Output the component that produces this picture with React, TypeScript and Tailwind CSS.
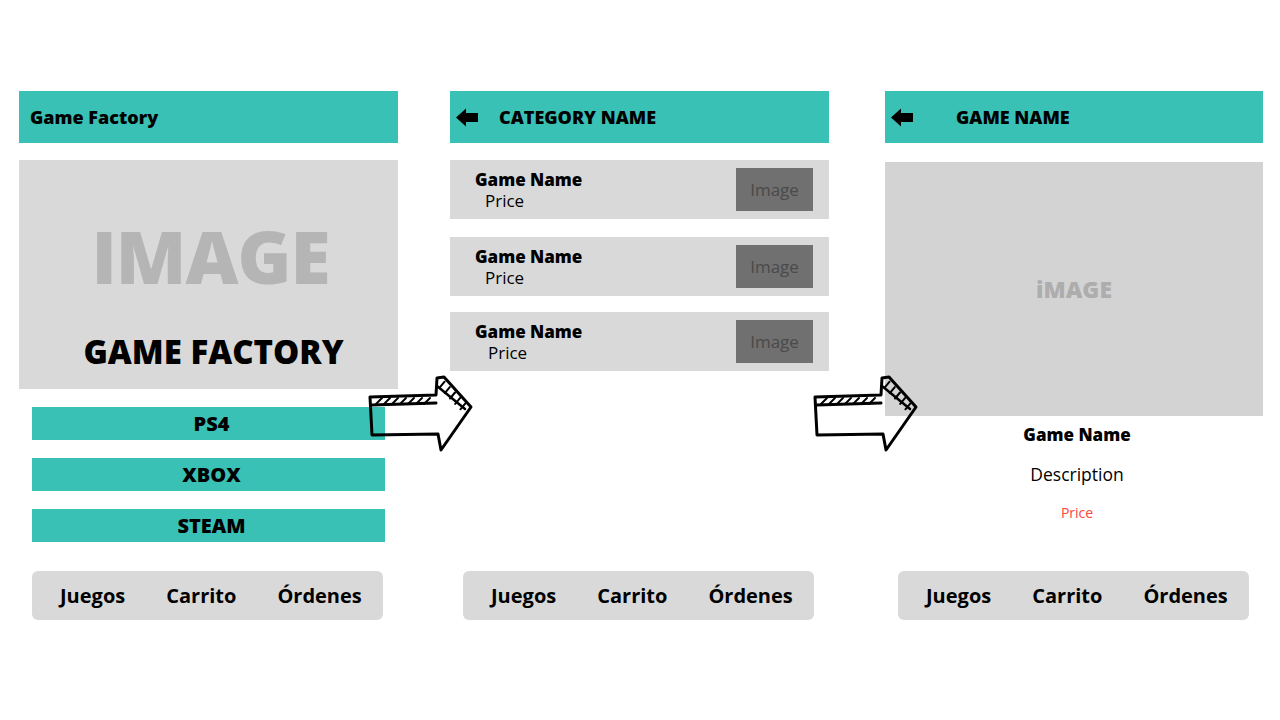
import React from "react";

const font = { fontFamily: '"Open Sans", "Noto Sans", sans-serif' };

function BackArrow() {
  return (
    <svg width="23" height="19" viewBox="0 0 23 19" className="shrink-0">
      <path d="M0 9.5 L10 0.5 L10 5 L22 5 L22 14 L10 14 L10 18.5 Z" fill="#000" />
    </svg>
  );
}

function SketchArrow({ className }: { className: string }) {
  const hatches = [];
  for (let x = 10; x <= 64; x += 8) {
    hatches.push(<path key={x} d={`M${x} 30 L${x + 6} 24`} />);
  }
  const headHatches = [];
  for (let i = 0; i < 5; i++) {
    const t = (i + 0.5) / 5;
    const ox = 76 + t * 26;
    const oy = 4 + t * 27;
    headHatches.push(<path key={i} d={`M${ox - 5} ${oy + 7} L${ox} ${oy + 1}`} />);
  }
  return (
    <svg
      width="110"
      height="80"
      viewBox="0 0 110 80"
      className={className}
      fill="none"
      stroke="#000"
      strokeLinecap="round"
      strokeLinejoin="round"
    >
      <path d="M4 23 L70 21 L71 4 L78 3 L105 33 L75 76 L72 60 L6 61 Z" strokeWidth="3" />
      <path d="M6 31 L70 29" strokeWidth="3" />
      <path d="M71 12 L99 35" strokeWidth="2.5" />
      <g strokeWidth="2">{hatches}</g>
      <g strokeWidth="2">{headHatches}</g>
    </svg>
  );
}

function Nav() {
  return (
    <div className="mt-auto ml-[13px] flex h-[49px] w-[351px] items-center gap-[41px] rounded-[6px] bg-[#d9d9d9] pl-[28px] text-[20px] font-bold text-black">
      <span className="mt-[1px]">Juegos</span>
      <span className="mt-[1px]">Carrito</span>
      <span className="mt-[1px]">Órdenes</span>
    </div>
  );
}

function Header({ title, back, textLeft }: { title: string; back?: boolean; textLeft: string }) {
  return (
    <div className="flex h-[52px] items-center bg-[#38c1b4]">
      {back ? (
        <div className="flex items-center pl-[6px]">
          <BackArrow />
          <span className={`${textLeft} mt-[1px] text-[18px] font-extrabold text-black`}>{title}</span>
        </div>
      ) : (
        <span className="mt-[1px] pl-[11px] text-[18px] font-extrabold text-black">{title}</span>
      )}
    </div>
  );
}

function Item({ priceIndent }: { priceIndent: string }) {
  return (
    <div className="flex h-[59px] items-center justify-between bg-[#d9d9d9] pl-[25px] pr-[16px]">
      <div className="flex flex-col">
        <span className="text-[17px] font-extrabold leading-[21px] text-black">Game Name</span>
        <span className={`${priceIndent} text-[17px] leading-[21px] text-black`}>Price</span>
      </div>
      <div className="flex h-[43px] w-[77px] items-center justify-center bg-[#707070] text-[17px] text-[#4a4a4a]">
        Image
      </div>
    </div>
  );
}

export default function App() {
  return (
    <div className="relative h-[720px] w-[1280px] overflow-hidden bg-white" style={font}>
      <div className="flex pl-[19px] pt-[91px]">
        {/* Column 1 */}
        <div className="flex h-[529px] w-[379px] flex-col">
          <Header title="Game Factory" textLeft="" />
          <div className="mt-[17px] flex h-[229px] flex-col items-center bg-[#d9d9d9]">
            <span className="ml-[4px] mt-[52px] text-[73px] font-extrabold leading-[88px] tracking-[-1px] text-[#b5b5b5]">IMAGE</span>
            <span className="ml-[10px] mt-[31px] text-[33px] font-extrabold leading-[42px] text-black">GAME FACTORY</span>
          </div>
          <div className="ml-[13px] mt-[18px] flex w-[353px] flex-col gap-[18px]">
            {["PS4", "XBOX", "STEAM"].map((t) => (
              <div key={t} className="flex h-[33px] items-center justify-center bg-[#38c1b4] pl-[6px] text-[20px] font-extrabold text-black">
                {t}
              </div>
            ))}
          </div>
          <Nav />
        </div>

        {/* Column 2 */}
        <div className="ml-[52px] flex h-[529px] w-[379px] flex-col">
          <Header title="CATEGORY NAME" back textLeft="ml-[20px]" />
          <div className="mt-[17px] flex flex-col">
            <Item priceIndent="ml-[10px]" />
            <div className="mt-[18px]">
              <Item priceIndent="ml-[10px]" />
            </div>
            <div className="mt-[16px]">
              <Item priceIndent="ml-[13px]" />
            </div>
          </div>
          <Nav />
        </div>

        {/* Column 3 */}
        <div className="ml-[56px] flex h-[529px] w-[378px] flex-col">
          <Header title="GAME NAME" back textLeft="ml-[42px]" />
          <div className="mt-[19px] flex h-[254px] items-center justify-center bg-[#d3d3d3]">
            <span className="text-[23px] font-extrabold text-[#adadad]">iMAGE</span>
          </div>
          <div className="flex flex-col items-center pl-[6px]">
            <span className="mt-[7px] text-[17px] font-extrabold leading-[24px] text-black">Game Name</span>
            <span className="mt-[15px] text-[17.5px] leading-[24px] text-black">Description</span>
            <span className="mt-[15px] text-[14px] leading-[24px] text-[#ff4242]">Price</span>
          </div>
          <Nav />
        </div>
      </div>

      <SketchArrow className="absolute left-[366px] top-[374px]" />
      <SketchArrow className="absolute left-[811px] top-[374px]" />
    </div>
  );
}
